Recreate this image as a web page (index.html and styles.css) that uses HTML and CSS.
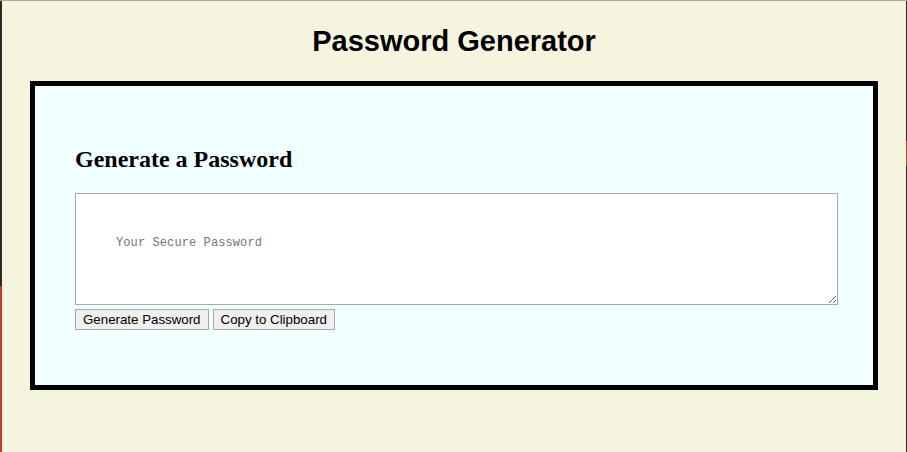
FILE: index.html
```html
<!DOCTYPE html>
<html lang="en">
<head>
<meta charset="utf-8">
<title>Password Generator</title>
<link rel="stylesheet" href="styles.css">
</head>
<body>
<div class="wrapper">
  <header class="page-header">
    <h1 class="page-title">Password Generator</h1>
  </header>
  <main class="card">
    <h2 class="card-title">Generate a Password</h2>
    <textarea class="password" readonly placeholder="Your Secure Password" aria-label="Generated Password"></textarea>
    <div class="actions">
      <button class="btn" type="button">Generate Password</button>
      <button class="btn" type="button">Copy to Clipboard</button>
    </div>
  </main>
</div>
</body>
</html>
```
FILE: styles.css
```css
html {
  height: 100%;
  border-top: 1px solid #a7a7a3;
  box-sizing: border-box;
  background:
    linear-gradient(#2e2a22 0 285px, #c23a2a 285px) left top / 2px 100% no-repeat,
    linear-gradient(#2e2a22 0 140px, #b64a3a 140px 165px, #2e2a22 165px) right top / 1px 100% no-repeat,
    #f5f4de;
}

body {
  margin: 0;
  font-family: "Liberation Serif", "Times New Roman", serif;
  color: #000;
}

.wrapper {
  padding: 0 29px 0 30px;
}

.page-header {
  display: flex;
  justify-content: center;
  padding-top: 20px;
  height: 60px;
  box-sizing: border-box;
}

.page-title {
  margin: 0;
  font-family: "Liberation Sans", Arial, sans-serif;
  font-weight: 700;
  font-size: 29px;
  line-height: 40px;
  letter-spacing: 0;
}

.card {
  display: block;
  background: #f0ffff;
  border: 5px solid #000;
  padding: 40px 35px 55px 40px;
  margin-top: 20px;
}

.card-title {
  margin: 20px 0 20px;
  font-size: 24px;
  font-weight: 700;
  line-height: 27px;
  font-family: "Liberation Serif", "Times New Roman", serif;
}

.password {
  display: block;
  box-sizing: border-box;
  width: 100%;
  height: 112px;
  margin: 0;
  padding: 41px 40px 39px;
  border: 1px solid #a9a9a9;
  background: #fff;
  font-family: "Liberation Mono", "Courier New", monospace;
  font-size: 12px;
  line-height: 16px;
  letter-spacing: 0.1px;
  resize: both;
}

.password::placeholder {
  color: #757575;
}

.actions {
  display: flex;
  gap: 4px;
  margin-top: 4px;
}

.btn {
  font-family: "Liberation Sans", Arial, sans-serif;
  font-size: 13.3px;
  height: 21px;
  padding: 1px 7px;
  border: 1px solid #a9a9a9;
  background: #efefef;
  color: #000;
  border-radius: 0;
}
```
